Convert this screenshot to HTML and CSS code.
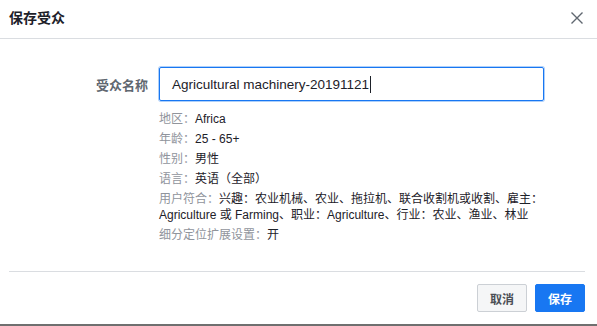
FILE: index.html
```html
<!DOCTYPE html>
<html lang="zh-CN">
<head>
  <meta charset="UTF-8" />
  <meta name="viewport" content="width=device-width, initial-scale=1.0"/>
  <title>保存受众</title>
  <link rel="stylesheet" href="styles.css">
</head>
<body>
  <div class="dialog">
    <div class="header">
      <h1>保存受众</h1>
      <button class="close-btn" aria-label="关闭">
        <svg width="12" height="12" viewBox="0 0 12 12">
          <path d="M0.5 0.5 L11.5 11.5 M11.5 0.5 L0.5 11.5" stroke="#606770" stroke-width="1.4" fill="none"/>
        </svg>
      </button>
    </div>

    <div class="content">
      <div class="form-row">
        <label>受众名称</label>
        <div class="name-input"><span>Agricultural machinery-20191121</span><span class="caret"></span></div>
      </div>

      <div class="details">
        <p><span class="key">地区：</span>Africa</p>
        <p><span class="key">年龄：</span>25 - 65+</p>
        <p><span class="key">性别：</span>男性</p>
        <p><span class="key">语言：</span>英语（全部）</p>
        <p><span class="key">用户符合：</span>兴趣：农业机械、农业、拖拉机、联合收割机或收割、雇主：Agriculture 或 Farming、职业：Agriculture、行业：农业、渔业、林业</p>
        <p><span class="key">细分定位扩展设置：</span>开</p>
      </div>
    </div>

    <div class="footer">
      <button class="cancel-button">取消</button>
      <button class="save-button">保存</button>
    </div>
  </div>
</body>
</html>
```

FILE: styles.css
```css
html, body {
  margin: 0;
  height: 326px;
}

body {
  font-family: "Liberation Sans", Arial, "Noto Sans CJK SC", sans-serif;
  background-color: #6f6f6f;
  color: #1d2129;
}

.dialog {
  background-color: white;
  height: 324px;
  display: flex;
  flex-direction: column;
}

.header {
  height: 39px;
  box-sizing: border-box;
  padding: 0 14px 3px 9px;
  border-bottom: 1px solid #dadde1;
  display: flex;
  align-items: center;
  justify-content: space-between;
}

h1 {
  margin: 0;
  font-size: 14px;
  font-weight: bold;
  line-height: 18px;
}

.close-btn {
  background: none;
  border: none;
  padding: 0;
  display: flex;
  cursor: pointer;
}

.content {
  padding-top: 28px;
}

.form-row {
  display: flex;
  align-items: center;
}

.form-row label {
  width: 148px;
  margin-right: 11px;
  text-align: right;
  font-size: 13px;
  font-weight: bold;
  color: #606770;
}

.name-input {
  width: 385px;
  height: 34px;
  box-sizing: border-box;
  border: 1px solid #1877f2;
  border-radius: 2px;
  box-shadow: 0 0 0 1px rgba(24, 119, 242, 0.35);
  padding-left: 12px;
  display: flex;
  align-items: center;
  font-size: 13.5px;
}

.caret {
  width: 1px;
  height: 17px;
  background-color: #1d2129;
  margin-left: 1px;
}

.details {
  margin: 10px 0 0 159px;
  width: 385px;
  font-size: 12px;
}

.details p {
  margin: 4px 0 0;
  line-height: 16px;
}

.details .key {
  color: #90949c;
}

.footer {
  margin: auto 12px 0 9px;
  border-top: 1px solid #dadde1;
  padding: 12px 0;
  display: flex;
  justify-content: flex-end;
  gap: 8px;
}

.cancel-button, .save-button {
  width: 50px;
  height: 28px;
  font-family: inherit;
  font-size: 12px;
  font-weight: bold;
  border-radius: 2px;
  cursor: pointer;
}

.cancel-button {
  background-color: #f5f6f7;
  border: 1px solid #ccd0d5;
  color: #4b4f56;
}

.save-button {
  background-color: #1877f2;
  border: 1px solid #1877f2;
  color: white;
}
```
